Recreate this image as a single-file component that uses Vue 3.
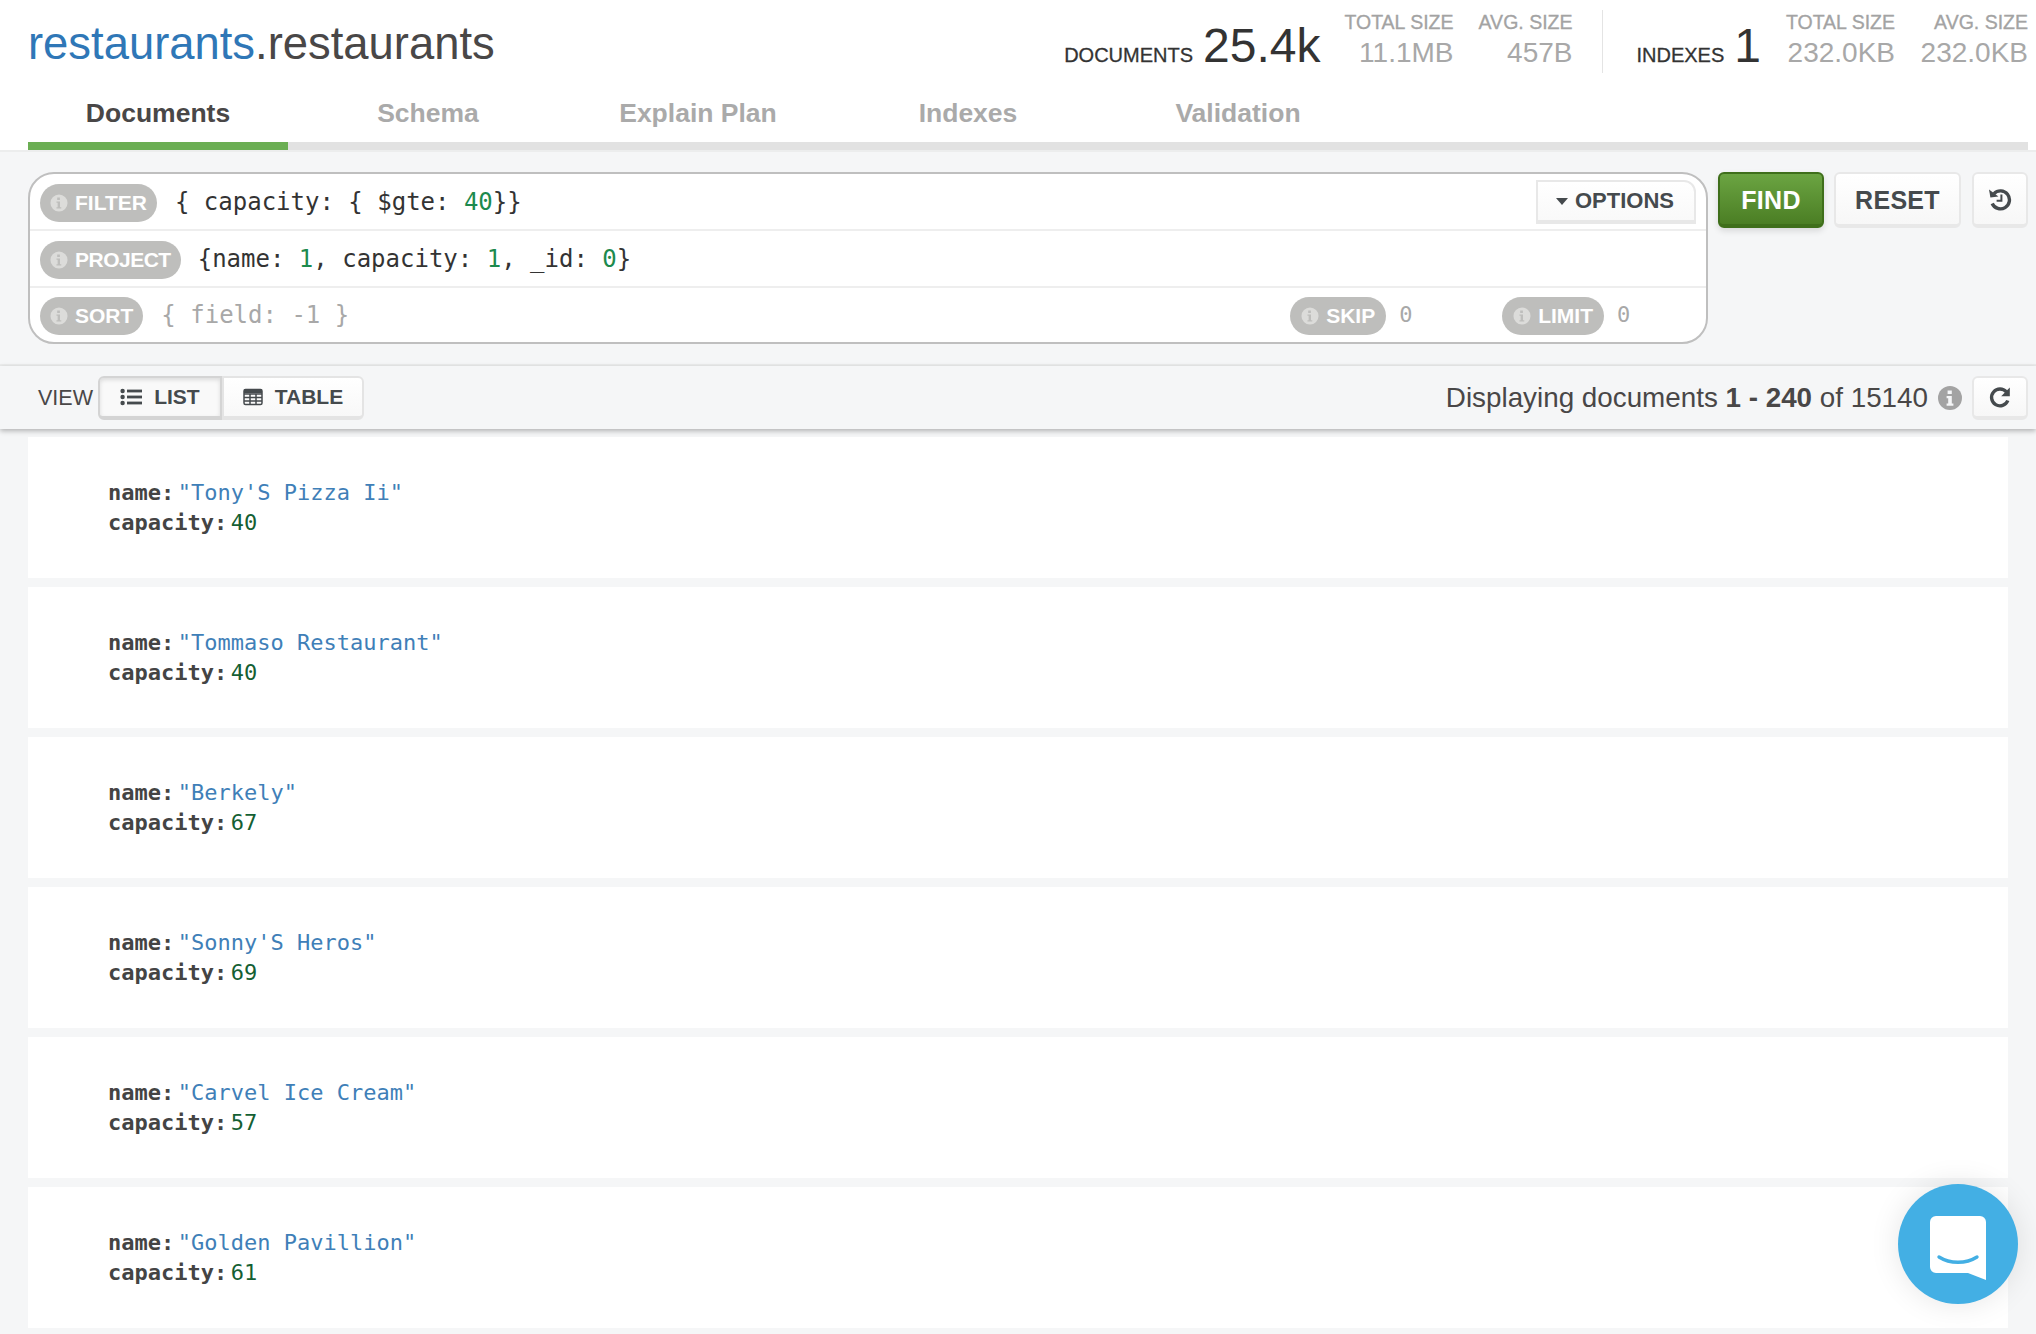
<script setup>
const docs = [
  { name: "Tony'S Pizza Ii", capacity: 40 },
  { name: 'Tommaso Restaurant', capacity: 40 },
  { name: 'Berkely', capacity: 67 },
  { name: "Sonny'S Heros", capacity: 69 },
  { name: 'Carvel Ice Cream', capacity: 57 },
  { name: 'Golden Pavillion', capacity: 61 },
]
const tabs = ['Documents', 'Schema', 'Explain Plan', 'Indexes', 'Validation']
</script>

<template>
  <div class="page">
    <header class="head">
      <div class="top">
        <div class="title"><span class="db">restaurants</span>.restaurants</div>
        <div class="stats">
          <div class="group">
            <span class="s-label">DOCUMENTS</span>
            <span class="s-big">25.4k</span>
            <div class="s-col w-doc"><span class="s-h">TOTAL SIZE</span><span class="s-v">11.1MB</span></div>
            <div class="s-col w-avg"><span class="s-h">AVG. SIZE</span><span class="s-v">457B</span></div>
          </div>
          <div class="divider"></div>
          <div class="group">
            <span class="s-label">INDEXES</span>
            <span class="s-big">1</span>
            <div class="s-col w-idx"><span class="s-h">TOTAL SIZE</span><span class="s-v">232.0KB</span></div>
            <div class="s-col w-idx2"><span class="s-h">AVG. SIZE</span><span class="s-v">232.0KB</span></div>
          </div>
        </div>
      </div>
      <nav class="tabs">
        <div v-for="(t, i) in tabs" :key="t" class="tab" :class="{ active: i === 0 }">{{ t }}</div>
      </nav>
    </header>

    <section class="query">
      <div class="qbox">
        <div class="qrow">
          <span class="pill"><svg class="i" viewBox="0 0 20 20"><circle cx="10" cy="10" r="9.5" fill="#dcdcda"/><path d="M8 4h3v2.6H8zM7.2 8.2h3.9v6.4h1.4v1.6H7.2v-1.6h1.3v-4.8H7.2z" fill="#bebebc"/></svg>FILTER</span>
          <code class="code f1">{ capacity: { $gte: <b>40</b>}}</code>
          <div class="options"><span class="caret"></span>OPTIONS</div>
        </div>
        <div class="qrow">
          <span class="pill tight"><svg class="i" viewBox="0 0 20 20"><circle cx="10" cy="10" r="9.5" fill="#dcdcda"/><path d="M8 4h3v2.6H8zM7.2 8.2h3.9v6.4h1.4v1.6H7.2v-1.6h1.3v-4.8H7.2z" fill="#bebebc"/></svg>PROJECT</span>
          <code class="code f2">{name: <b>1</b>, capacity: <b>1</b>, _id: <b>0</b>}</code>
        </div>
        <div class="qrow last">
          <span class="pill"><svg class="i" viewBox="0 0 20 20"><circle cx="10" cy="10" r="9.5" fill="#dcdcda"/><path d="M8 4h3v2.6H8zM7.2 8.2h3.9v6.4h1.4v1.6H7.2v-1.6h1.3v-4.8H7.2z" fill="#bebebc"/></svg>SORT</span>
          <code class="code ph f3">{ field: -1 }</code>
          <span class="pill wide"><svg class="i" viewBox="0 0 20 20"><circle cx="10" cy="10" r="9.5" fill="#dcdcda"/><path d="M8 4h3v2.6H8zM7.2 8.2h3.9v6.4h1.4v1.6H7.2v-1.6h1.3v-4.8H7.2z" fill="#bebebc"/></svg>SKIP</span>
          <code class="code ph num w-skip">0</code>
          <span class="pill wide"><svg class="i" viewBox="0 0 20 20"><circle cx="10" cy="10" r="9.5" fill="#dcdcda"/><path d="M8 4h3v2.6H8zM7.2 8.2h3.9v6.4h1.4v1.6H7.2v-1.6h1.3v-4.8H7.2z" fill="#bebebc"/></svg>LIMIT</span>
          <code class="code ph num w-limit">0</code>
        </div>
      </div>
      <button class="btn find">FIND</button>
      <button class="btn reset">RESET</button>
      <button class="btn square">
        <svg viewBox="0 0 24 24" width="24" height="24" fill="none" stroke="#454a4d" stroke-width="3.4"><path d="M6 6.6A9 9 0 1 1 4.2 16.5"/><path d="M1 2.6l1.4 8 8-1.2z" fill="#454a4d" stroke="none"/><path d="M13.4 7.5v6.3H8.6" stroke-width="2"/></svg>
      </button>
    </section>

    <section class="viewbar">
      <span class="view-label">VIEW</span>
      <div class="seg">
        <button class="seg-btn on">
          <svg viewBox="0 0 22 18" width="22" height="18" fill="#454a4d"><circle cx="2.6" cy="3" r="2.2"/><circle cx="2.6" cy="9" r="2.2"/><circle cx="2.6" cy="15" r="2.2"/><rect x="7" y="1.6" width="15" height="2.8"/><rect x="7" y="7.6" width="15" height="2.8"/><rect x="7" y="13.6" width="15" height="2.8"/></svg>
          LIST
        </button>
        <button class="seg-btn">
          <svg viewBox="0 0 20 18" width="20" height="18" fill="none" stroke="#454a4d" stroke-width="1.5"><rect x="1" y="1.5" width="18" height="15" rx="1.5"/><path d="M1 6h18M1 9.6h18M1 13.1h18M7 6v10.5M13 6v10.5"/><path d="M1 3.5h18" stroke-width="3.5"/></svg>
          TABLE
        </button>
      </div>
      <div class="spacer"></div>
      <span class="count">Displaying documents <b>1 - 240</b> of 15140</span>
      <svg class="count-i" viewBox="0 0 24 24" width="24" height="24"><circle cx="12" cy="12" r="12" fill="#a3a3a3"/><path d="M9.6 4.4h4.2v3.6H9.6zM8.6 10h5.2v7.6h1.6v2.2H8.6v-2.2h1.6v-5.4H8.6z" fill="#f5f6f7"/></svg>
      <button class="btn square refresh">
        <svg viewBox="0 0 24 24" width="24" height="24" fill="none" stroke="#454a4d" stroke-width="3.4"><path d="M18.4 7A8.4 8.4 0 1 0 19.8 15.5"/><path d="M21.8 2.6v8.6h-8.6z" fill="#454a4d" stroke="none"/></svg>
      </button>
    </section>

    <main class="docs">
      <article v-for="d in docs" :key="d.name" class="doc">
        <div class="line"><span class="k">name:</span><span class="str">"{{ d.name }}"</span></div>
        <div class="line"><span class="k">capacity:</span><span class="n">{{ d.capacity }}</span></div>
      </article>
    </main>

    <div class="chat">
      <svg viewBox="0 0 56 64" width="56" height="64">
        <path d="M6 0h44a6 6 0 0 1 6 6v58l-18-7H6a6 6 0 0 1-6-6V6a6 6 0 0 1 6-6z" fill="#fff"/>
        <path d="M9 41c11 7 27 7 38 0" fill="none" stroke="#43afe4" stroke-width="3.4" stroke-linecap="round"/>
      </svg>
    </div>
  </div>
</template>

<style>
html, body { margin: 0; background: #f5f6f7; }
</style>

<style scoped>
.page {
  position: relative;
  width: 2036px;
  height: 1334px;
  overflow: hidden;
  background: #f5f6f7;
  font-family: "Liberation Sans", Arial, sans-serif;
  color: #494747;
}
.head { background: #fff; height: 150px; padding: 0 8px 0 28px; box-sizing: border-box; box-shadow: 0 2px 0 #eceded; }
.top { display: flex; justify-content: space-between; height: 92px; }
.title { font-size: 45.4px; line-height: 52px; padding-top: 18px; color: #494747; }
.db { color: #2f77b7; }
.stats { display: flex; align-items: flex-start; padding-top: 10px; }
.group { display: flex; align-items: flex-start; }
.s-label { font-size: 20px; color: #333; margin-top: 34px; -webkit-text-stroke: 0.3px #333; }
.s-big { font-size: 48px; line-height: 54px; color: #333; margin: 9px 24px 0 10px; }
.s-col { display: flex; flex-direction: column; align-items: flex-end; }
.w-doc { width: 109px; margin-right: 24px; }
.w-avg { width: 95px; }
.w-idx { width: 110px; margin-right: 25px; }
.w-idx2 { width: 108px; }
.s-h { font-size: 19.5px; line-height: 24px; color: #a3a3a3; white-space: nowrap; -webkit-text-stroke: 0.3px #a3a3a3; }
.s-v { font-size: 28px; line-height: 36px; margin-top: 1px; color: #a8a8a8; white-space: nowrap; }
.divider { width: 1px; height: 63px; background: #e4e4e4; margin: 0 33px 0 30px; }
.tabs { display: flex; gap: 10px; height: 58px; background: linear-gradient(#fff 0 50px, #e2e2e2 50px); }
.tab { width: 260px; height: 58px; box-sizing: border-box; padding-top: 3px; text-align: center; font-size: 26.5px; line-height: 36px; font-weight: 700; color: #aaa; }
.tab.active { color: #494747; border-bottom: 8px solid #6bae53; }

.query { display: flex; align-items: flex-start; padding: 22px 8px 0 28px; height: 216px; box-sizing: border-box; border-bottom: 2px solid #eceded; }
.qbox { width: 1680px; height: 172px; box-sizing: border-box; border: 2px solid #bfbfbf; border-radius: 26px; background: #fff; margin-right: 10px; display: flex; flex-direction: column; }
.qrow { flex: 1; display: flex; align-items: center; padding: 3px 10px 0; border-bottom: 2px solid #eeeeee; }
.qrow.last { border-bottom: 0; padding-top: 2px; }
.pill { display: inline-flex; align-items: center; height: 38px; padding: 0 10px; border-radius: 19px; background: #bebebc; color: #fff; font-size: 21px; font-weight: 700; white-space: nowrap; }
.pill.tight { letter-spacing: -0.5px; }
.pill.wide { padding: 0 11px; }
.i { width: 18px; height: 18px; margin-right: 7px; }
.code { font-family: "DejaVu Sans Mono", "Liberation Mono", monospace; font-size: 24px; color: #333; white-space: pre; margin-bottom: 3px; }
.code b { font-weight: 400; color: #1d8a4e; }
.ph { color: #a8a8a8; }
.f1 { margin-left: 18px; flex: 1; }
.f2 { margin-left: 17px; }
.f3 { margin-left: 18px; flex: 1; }
.num { font-size: 22px; margin-left: 13px; }
.w-skip { width: 103px; }
.w-limit { width: 79px; }
.options { display: flex; align-items: center; width: 160px; height: 44px; box-sizing: border-box; border: 2px solid #e8e8e8; border-bottom-width: 4px; border-top-right-radius: 12px; background: linear-gradient(#fff, #f9f9f9); color: #454a4d; font-size: 22px; font-weight: 700; padding-left: 18px; margin-top: -2px; }
.caret { width: 0; height: 0; border-left: 6.5px solid transparent; border-right: 6.5px solid transparent; border-top: 7px solid #454a4d; margin-right: 7px; }
.btn { display: inline-flex; align-items: center; justify-content: center; height: 56px; box-sizing: border-box; padding: 3px 0 0; font-family: inherit; font-size: 25px; font-weight: 700; letter-spacing: 0.3px; color: #454a4d; background: linear-gradient(#fff, #f7f7f7); border: 2px solid #e8e8e8; border-bottom-width: 4px; border-radius: 6px; }
.find { width: 106px; margin-right: 10px; background: linear-gradient(#6ba442, #4b7e24); border: 2px solid #3f6f1b; border-bottom-width: 4px; color: #fff; box-shadow: 0 3px 6px rgba(0,0,0,.12); }
.reset { width: 127px; margin-right: 11px; }
.square { width: 56px; padding: 0; }

.viewbar { display: flex; align-items: center; height: 63px; padding: 1px 8px 0 38px; box-sizing: border-box; background: #f5f6f7; box-shadow: 0 2px 5px rgba(0,0,0,.28); position: relative; }
.view-label { font-size: 21.5px; color: #494747; margin-right: 5px; }
.seg { display: flex; }
.seg-btn { display: inline-flex; align-items: center; justify-content: center; gap: 12px; height: 44px; box-sizing: border-box; padding: 0; font-family: inherit; font-size: 21px; font-weight: 700; color: #454a4d; background: linear-gradient(#fff, #f8f8f8); border: 2px solid #e4e4e4; border-bottom-width: 4px; border-radius: 0 6px 6px 0; width: 142px; }
.seg-btn.on { width: 124px; border-radius: 6px 0 0 6px; border-color: #d4d4d4; box-shadow: inset 0 2px 4px rgba(0,0,0,.12); background: #f9f9f9; }
.spacer { flex: 1; }
.count { font-size: 27.8px; color: #494747; white-space: nowrap; }
.count b { font-weight: 700; }
.count-i { margin-left: 10px; margin-right: 10px; }
.refresh { height: 44px; }

.docs { display: flex; flex-direction: column; gap: 9px; padding: 8px 0 0 28px; width: 1980px; }
.doc { background: #fff; height: 141px; box-sizing: border-box; padding: 41px 0 0 80px; }
.line { font-family: "DejaVu Sans Mono", "Liberation Mono", monospace; font-size: 22px; line-height: 30px; white-space: pre; }
.k { font-weight: 700; color: #444; margin-right: 3.5px; }
.str { color: #3f7fb8; }
.n { color: #145f33; }

.chat { position: absolute; left: 1898px; top: 1184px; width: 120px; height: 120px; border-radius: 50%; background: #43afe4; display: flex; align-items: center; justify-content: center; box-shadow: 0 0 30px rgba(0,0,0,.1); }
.chat svg { margin-top: 7px; }
</style>
